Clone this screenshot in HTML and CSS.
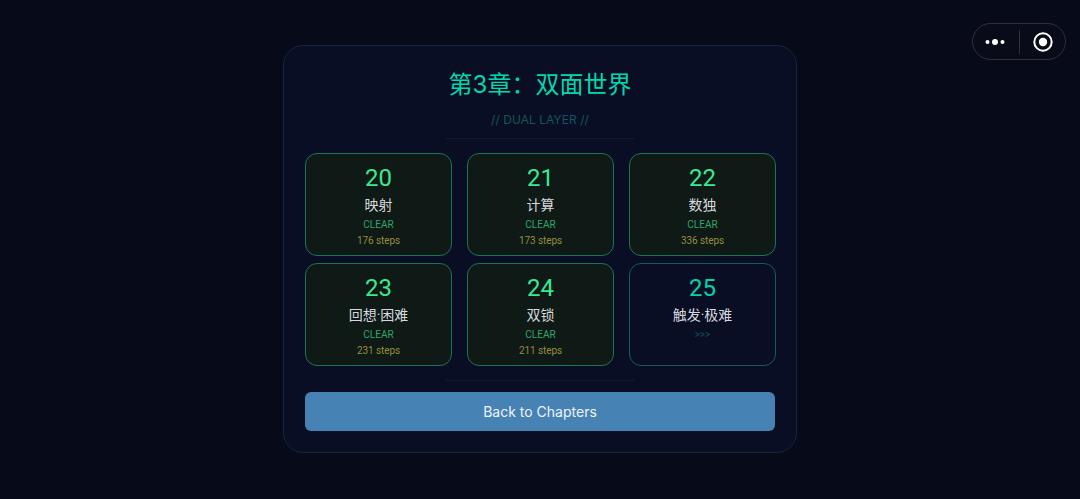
FILE: index.html
```html
<!DOCTYPE html>
<html lang="en">
<head>
  <meta charset="UTF-8">
  <title>第3章</title>
  <link rel="stylesheet" href="styles.css">
</head>
<body>

  <div class="capsule">
    <svg class="more-icon" width="20" height="8" viewBox="0 0 20 8">
      <circle cx="2.5" cy="4" r="2" fill="#fff"/>
      <circle cx="10" cy="4" r="3" fill="#fff"/>
      <circle cx="17.5" cy="4" r="2" fill="#fff"/>
    </svg>
    <span class="capsule-line"></span>
    <svg class="close-icon" width="20" height="20" viewBox="0 0 20 20">
      <circle cx="10" cy="10" r="8.7" fill="none" stroke="#fff" stroke-width="2"/>
      <circle cx="10" cy="10" r="4.2" fill="#fff"/>
    </svg>
  </div>

  <div class="panel">
    <h2>第3章：双面世界</h2>
    <p class="subtitle">// DUAL LAYER //</p>
    <hr class="divider">

    <div class="level-grid">
      <div class="level clear">
        <div class="num">20</div>
        <div class="name">映射</div>
        <div class="status">CLEAR</div>
        <div class="steps">176 steps</div>
      </div>
      <div class="level clear">
        <div class="num">21</div>
        <div class="name">计算</div>
        <div class="status">CLEAR</div>
        <div class="steps">173 steps</div>
      </div>
      <div class="level clear">
        <div class="num">22</div>
        <div class="name">数独</div>
        <div class="status">CLEAR</div>
        <div class="steps">336 steps</div>
      </div>
      <div class="level clear">
        <div class="num">23</div>
        <div class="name">回想·困难</div>
        <div class="status">CLEAR</div>
        <div class="steps">231 steps</div>
      </div>
      <div class="level clear">
        <div class="num">24</div>
        <div class="name">双锁</div>
        <div class="status">CLEAR</div>
        <div class="steps">211 steps</div>
      </div>
      <div class="level">
        <div class="num">25</div>
        <div class="name">触发·极难</div>
        <div class="status">&gt;&gt;&gt;</div>
      </div>
    </div>

    <hr class="divider bottom">
    <button type="button" class="back-btn">Back to Chapters</button>
  </div>

</body>
</html>
```

FILE: styles.css
```css
* {
  box-sizing: border-box;
}

body {
  font-family: Roboto, "Noto Sans CJK SC", sans-serif;
  background-color: #070a18;
  margin: 0;
  height: 499px;
  overflow: hidden;
  position: relative;
  display: flex;
  justify-content: center;
  padding-top: 45px;
}

.capsule {
  position: absolute;
  top: 23px;
  left: 972px;
  width: 94px;
  height: 37px;
  border: 1px solid #2e303b;
  border-radius: 19px;
  background-color: #090b18;
  display: flex;
  align-items: center;
}

.more-icon {
  margin-left: 12px;
}

.capsule-line {
  width: 1px;
  height: 24px;
  margin-left: 14px;
  background-color: #2e303b;
}

.close-icon {
  margin-left: 13px;
}

.panel {
  width: 514px;
  height: 408px;
  padding: 0 21px;
  background-color: #0a0e24;
  border: 1px solid #12283f;
  border-radius: 20px;
  display: flex;
  flex-direction: column;
  align-items: center;
}

h2 {
  margin: 21px 0 0;
  font-family: Inter, "Noto Sans CJK SC", sans-serif;
  font-size: 24px;
  line-height: 35px;
  font-weight: 400;
  color: #00d8ad;
}

.subtitle {
  margin: 9px 0 0;
  font-family: Inter, sans-serif;
  font-size: 12px;
  letter-spacing: 0.05px;
  line-height: 18px;
  color: #10555f;
}

.divider {
  width: 188px;
  height: 1px;
  margin: 9px 0 0;
  border: none;
  background-color: #111a33;
}

.divider.bottom {
  margin-top: 14px;
}

.level-grid {
  align-self: flex-start;
  margin-top: 14px;
  display: grid;
  grid-template-columns: repeat(3, 147px);
  grid-auto-rows: 103px;
  column-gap: 15px;
  row-gap: 7px;
}

.level {
  border: 1px solid #125c66;
  border-radius: 12px;
  background-color: #0a0e24;
  display: flex;
  flex-direction: column;
  align-items: center;
  padding-top: 9px;
}

.level.clear {
  border-color: #1c7456;
  background-color: #0f1a16;
}

.num {
  font-size: 24px;
  line-height: 30px;
  color: #00d4aa;
}

.clear .num {
  color: #3ce890;
}

.name {
  margin-top: 2px;
  font-size: 14px;
  line-height: 20px;
  color: #d5d8de;
}

.status {
  margin-top: 2px;
  font-size: 10px;
  line-height: 15px;
  color: #14505a;
}

.clear .status {
  color: #30a56c;
}

.steps {
  margin-top: 1px;
  font-size: 10px;
  letter-spacing: -0.1px;
  line-height: 15px;
  color: #948c3e;
}

.back-btn {
  width: 470px;
  height: 39px;
  margin-top: 11px;
  border: none;
  border-radius: 6px;
  background-color: #4682b4;
  color: #eef4fa;
  font-family: Inter, sans-serif;
  font-size: 14px;
}
```
